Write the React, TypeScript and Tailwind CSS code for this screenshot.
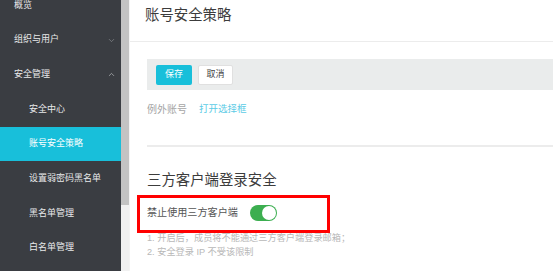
import { ChevronDown, ChevronUp } from 'lucide-react'

type NavItem = {
  label: string
  sub?: boolean
  active?: boolean
  chevron?: 'down' | 'up'
}

const navItems: NavItem[] = [
  { label: '概览' },
  { label: '组织与用户', chevron: 'down' },
  { label: '安全管理', chevron: 'up' },
  { label: '安全中心', sub: true },
  { label: '账号安全策略', sub: true, active: true },
  { label: '设置弱密码黑名单', sub: true },
  { label: '黑名单管理', sub: true },
  { label: '白名单管理', sub: true },
]

function Sidebar() {
  return (
    <aside className="flex h-full w-[130px] shrink-0">
      <nav className="h-full w-[121px] overflow-hidden bg-[#3a3d42]">
        <ul className="-mt-[12px]">
          {navItems.map((item) => (
            <li
              key={item.label}
              className={`flex h-[34.7px] items-center justify-between pr-[5px] text-[9px] ${
                item.sub ? 'pl-[29px]' : 'pl-[14px]'
              } ${item.active ? 'bg-[#18bfda] text-white' : 'text-[#e8e9ea]'}`}
            >
              <span>{item.label}</span>
              {item.chevron === 'down' ? (
                <ChevronDown className="h-[9px] w-[9px] text-[#9a9da1]" strokeWidth={1.5} />
              ) : null}
              {item.chevron === 'up' ? (
                <ChevronUp className="h-[9px] w-[9px] text-[#d5d6d8]" strokeWidth={1.5} />
              ) : null}
            </li>
          ))}
        </ul>
      </nav>
      <div className="h-full w-[8px] bg-[#f1f1f1]">
        <div className="h-[205px] w-full bg-[#c3c3c3]" />
      </div>
      <div className="h-full w-[1px] bg-[#f4f4f4]" />
    </aside>
  )
}

function Toggle() {
  return (
    <span className="flex h-[16px] w-[27px] items-center justify-end rounded-full bg-[#3cae50] p-[1px]">
      <span className="h-[14px] w-[14px] rounded-full bg-white" />
    </span>
  )
}

export default function App() {
  return (
    <div className="flex h-[271px] w-[553px] overflow-hidden bg-white font-['Liberation_Sans','Noto_Sans_CJK_SC',sans-serif]">
      <Sidebar />
      <main className="min-w-0 flex-1">
        <header className="h-[42px] border-b border-[#ececec] pl-[15px] pt-[5px]">
          <h1 className="text-[14.4px] leading-[20px] text-[#3c3c3c]">账号安全策略</h1>
        </header>

        <div className="pl-[17px]">
          <div className="mt-[17px] flex h-[31px] items-center gap-[6px] bg-[#eaecec] pl-[9px]">
            <button
              className="h-[20px] w-[36px] rounded-[2px] bg-[#18bfda] text-[9px] text-white"
              type="button"
            >
              保存
            </button>
            <button
              className="h-[20px] w-[35px] rounded-[2px] border border-[#e0e0e0] bg-white text-[9px] text-[#444]"
              type="button"
            >
              取消
            </button>
          </div>

          <div className="mt-[9px] flex h-[20px] items-center gap-[12px] text-[10px]">
            <span className="text-[#a5a5a5]">例外账号</span>
            <a className="text-[9.5px] text-[#5ccbe6]" href="#">
              打开选择框
            </a>
          </div>

          <div className="mt-[26px] h-[2px] bg-[#ececec]" />

          <h2 className="mt-[23px] text-[14.4px] leading-[20px] text-[#3c3c3c]">
            三方客户端登录安全
          </h2>

          <div className="relative mt-[15px] flex h-[16px] items-center gap-[12px]">
            <span className="text-[10.1px] text-[#555]">禁止使用三方客户端</span>
            <Toggle />
            <div className="pointer-events-none absolute -left-[10px] -top-[10px] h-[38px] w-[193px] border-[3px] border-[#ff0000]" />
          </div>

          <div className="mt-[10px] text-[9.2px] leading-[14px] text-[#b8b8b8]">
            <p>1. 开启后，成员将不能通过三方客户端登录邮箱；</p>
            <p>2. 安全登录 IP 不受该限制</p>
          </div>
        </div>
      </main>
    </div>
  )
}
